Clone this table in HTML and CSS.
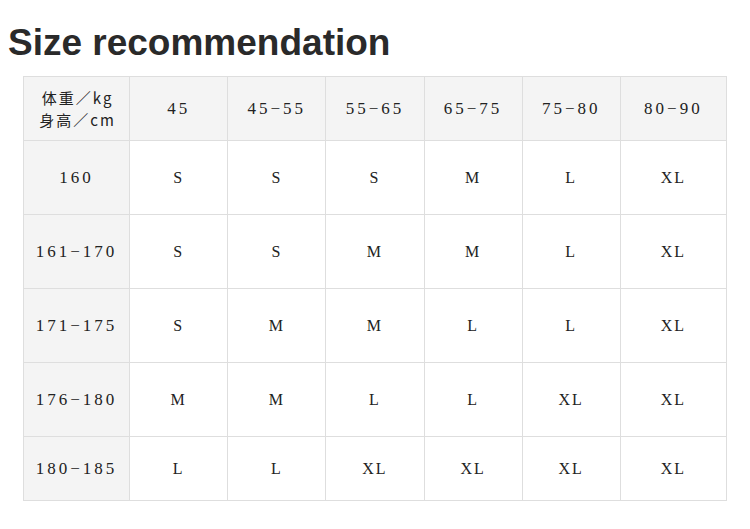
FILE: index.html
```html
<!DOCTYPE html>
<html>
<head>
<meta charset="utf-8">
<link rel="stylesheet" href="styles.css">
</head>
<body>
<h1 class="title">Size recommendation</h1>
<table class="size-table">
  <colgroup>
    <col class="c-first"><col class="c-mid"><col class="c-mid"><col class="c-mid"><col class="c-mid"><col class="c-mid"><col class="c-last">
  </colgroup>
  <thead>
    <tr class="head-row">
      <th class="corner">体重／kg<br>身高／cm</th>
      <th>45</th><th>45−55</th><th>55−65</th><th>65−75</th><th>75−80</th><th>80−90</th>
    </tr>
  </thead>
  <tbody>
    <tr><th>160</th><td>S</td><td>S</td><td>S</td><td>M</td><td>L</td><td>XL</td></tr>
    <tr><th>161−170</th><td>S</td><td>S</td><td>M</td><td>M</td><td>L</td><td>XL</td></tr>
    <tr><th>171−175</th><td>S</td><td>M</td><td>M</td><td>L</td><td>L</td><td>XL</td></tr>
    <tr><th>176−180</th><td>M</td><td>M</td><td>L</td><td>L</td><td>XL</td><td>XL</td></tr>
    <tr class="last-row"><th>180−185</th><td>L</td><td>L</td><td>XL</td><td>XL</td><td>XL</td><td>XL</td></tr>
  </tbody>
</table>
</body>
</html>
```
FILE: styles.css
```css
html, body {
  margin: 0;
  padding: 0;
  background: #ffffff;
}
body {
  padding: 0 8px;
}
.title {
  font-family: "Liberation Sans", Arial, sans-serif;
  font-weight: bold;
  font-size: 37px;
  line-height: 40px;
  color: #2a2a2a;
  margin: 23px 0 0 0;
}
.size-table {
  border-collapse: collapse;
  margin: 13px 0 0 15px;
  width: 704px;
  table-layout: fixed;
  font-family: "Liberation Serif", "Times New Roman", serif;
  color: #222;
}
.c-first { width: 106px; }
.c-mid { width: 98px; }
.c-last { width: 106px; }
.size-table th,
.size-table td {
  border: 1px solid #dedede;
  text-align: center;
  font-weight: normal;
  padding: 0;
  height: 73px;
}
.size-table td {
  font-size: 16px;
  letter-spacing: 2px;
  background: #fff;
}
.size-table th {
  font-size: 17px;
  letter-spacing: 3px;
  background: #f4f4f4;
}
.head-row th {
  height: 63px;
}
.last-row th, .last-row td {
  height: 63px;
}
.size-table .corner {
  font-family: "Noto Sans CJK SC", "Liberation Serif", sans-serif;
  font-size: 15px;
  line-height: 22px;
  letter-spacing: 2px;
  padding-left: 2px;
}
```
